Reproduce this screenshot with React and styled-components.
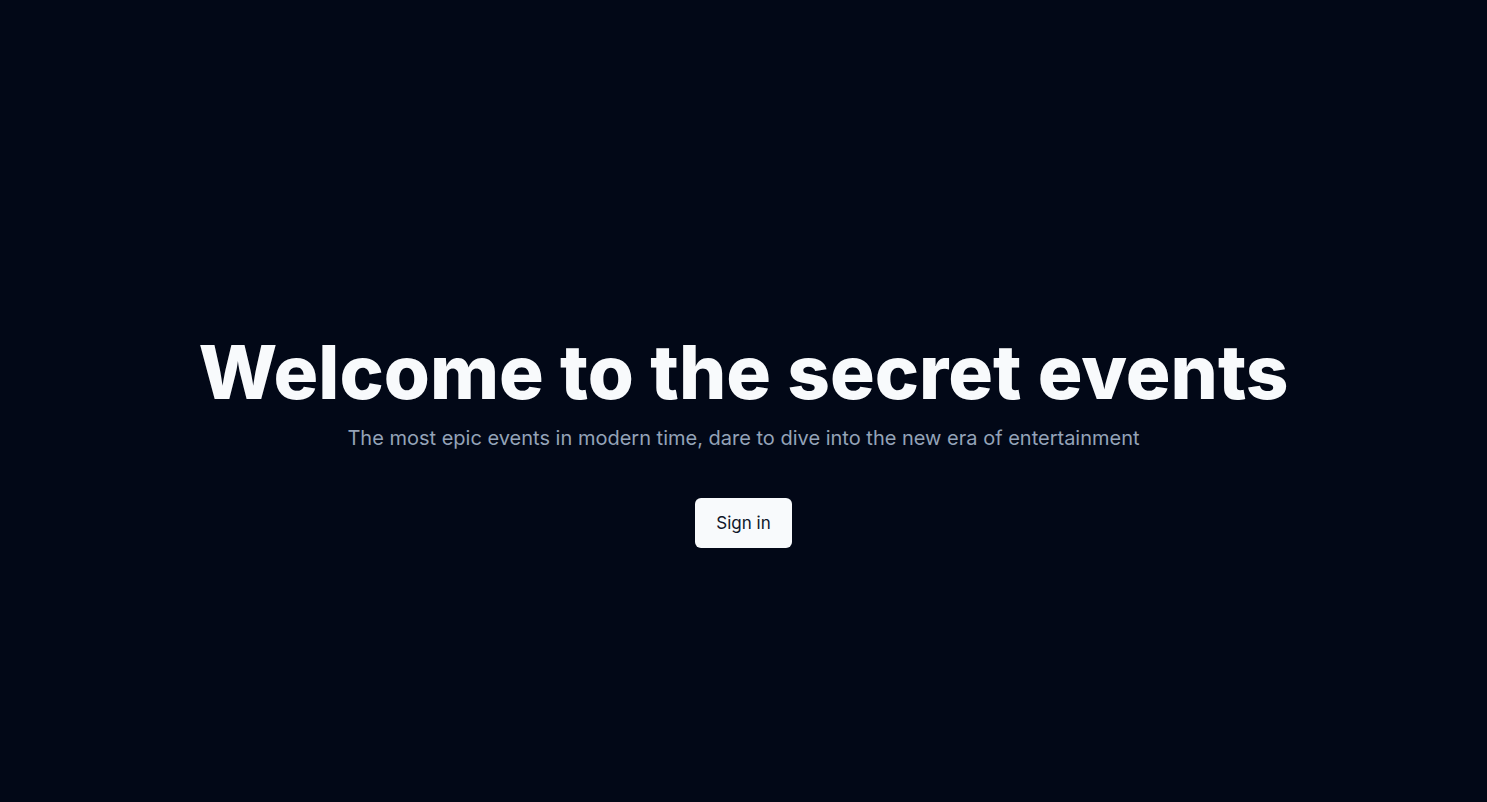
import React from 'react';
import styled, { createGlobalStyle } from 'styled-components';

const GlobalStyle = createGlobalStyle`
  html, body {
    margin: 0;
    padding: 0;
    background: #020817;
    font-family: Inter, "Noto Sans", sans-serif;
  }
`;

const Page = styled.main`
  min-height: 100vh;
  box-sizing: border-box;
  padding-top: 81px;

  display: flex;
  flex-direction: column;
  justify-content: center;
  align-items: center;

  background: #020817;
  color: #f8fafc;
`;

const Title = styled.h1`
  margin: 0;
  font-size: 74.5px;
  line-height: 1;
  font-weight: 800;
  letter-spacing: 0;
  color: #f8fafc;
`;

const Subtitle = styled.p`
  margin: 15px 0 0;
  font-size: 20px;
  line-height: 28px;
  color: #94a3b8;
`;

const SignInButton = styled.button`
  margin-top: 46px;
  height: 50px;
  padding: 0 21px;

  border: none;
  border-radius: 6px;
  background: #f8fafc;
  color: #0f172a;

  font-family: inherit;
  font-size: 17px;
  font-weight: 400;
  cursor: pointer;
`;

const App = () => {
  return (
    <>
      <GlobalStyle />
      <Page>
        <Title>Welcome to the secret events</Title>
        <Subtitle>
          The most epic events in modern time, dare to dive into the new era of entertainment
        </Subtitle>
        <SignInButton>Sign in</SignInButton>
      </Page>
    </>
  );
};

export default App;
